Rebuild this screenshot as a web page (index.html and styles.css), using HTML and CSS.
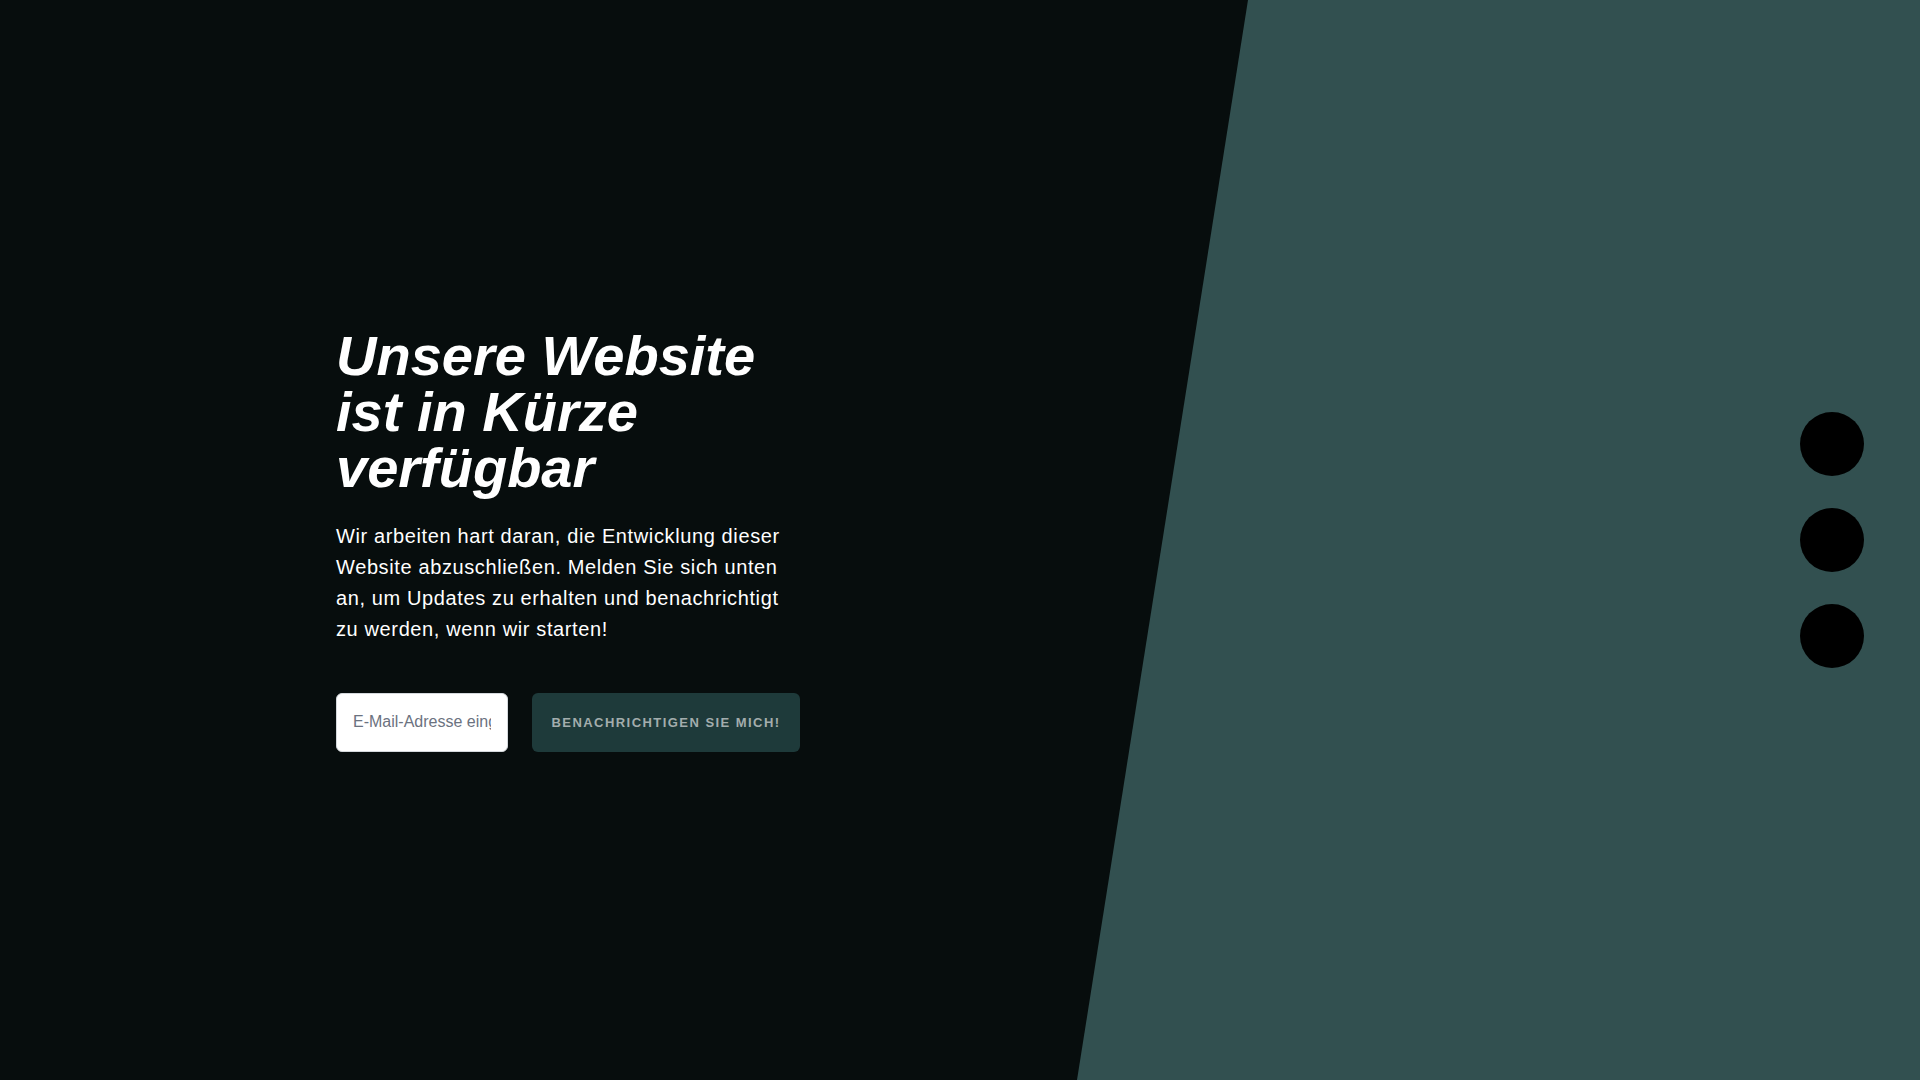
FILE: index.html
```html
<!DOCTYPE html>
<html lang="de">
<head>
<meta charset="utf-8">
<title>Bald verfügbar</title>
<link rel="stylesheet" href="styles.css">
</head>
<body>
<main class="page">
  <section class="intro">
    <h1 class="title">Unsere Website ist in Kürze verfügbar</h1>
    <p class="lead">Wir arbeiten hart daran, die Entwicklung dieser Website abzuschließen. Melden Sie sich unten an, um Updates zu erhalten und benachrichtigt zu werden, wenn wir starten!</p>
    <form class="signup">
      <input class="email" type="email" placeholder="E-Mail-Adresse eingeben">
      <button class="notify" type="button">Benachrichtigen Sie mich!</button>
    </form>
  </section>
  <nav class="social">
    <a class="dot" href="#"></a>
    <a class="dot" href="#"></a>
    <a class="dot" href="#"></a>
  </nav>
</main>
</body>
</html>
```
FILE: styles.css
```css
html, body {
  margin: 0;
  padding: 0;
  height: 100%;
}

body {
  background: #070d0d;
  font-family: "Liberation Sans", Arial, sans-serif;
  color: #ffffff;
  overflow: hidden;
}

.page {
  position: relative;
  height: 100vh;
  box-sizing: border-box;
  display: flex;
  align-items: center;
  justify-content: space-between;
  padding: 0 56px 0 336px;
}

.page::before {
  content: "";
  position: absolute;
  inset: 0;
  background: #325050;
  clip-path: polygon(1248px 0, 100% 0, 100% 100%, 1077px 100%);
  z-index: 0;
}

.intro {
  position: relative;
  z-index: 1;
  width: 464px;
}

.title {
  margin: -1px 0 25px;
  font-size: 56px;
  line-height: 56px;
  font-weight: 700;
  font-style: italic;
  color: #ffffff;
}

.lead {
  margin: 0 0 48px;
  font-size: 20px;
  line-height: 31px;
  letter-spacing: 0.62px;
  color: #ffffff;
}

.signup {
  display: flex;
  gap: 24px;
  height: 59px;
}

.email {
  width: 172px;
  box-sizing: border-box;
  padding: 0 16px;
  border: 1px solid #d4d8dc;
  border-radius: 6px;
  background: #ffffff;
  font-family: "Liberation Sans", Arial, sans-serif;
  font-size: 16px;
  color: #333;
  outline: none;
}

.email::placeholder {
  color: #6b7280;
}

.notify {
  flex: 1;
  border: none;
  border-radius: 6px;
  background: #1e3a3a;
  color: #a3adad;
  font-family: "Liberation Sans", Arial, sans-serif;
  font-size: 13px;
  font-weight: 700;
  letter-spacing: 1.45px;
  text-transform: uppercase;
  cursor: pointer;
}

.social {
  position: relative;
  z-index: 1;
  display: flex;
  flex-direction: column;
  gap: 32px;
}

.dot {
  display: block;
  width: 64px;
  height: 64px;
  border-radius: 50%;
  background: #000000;
}
```
